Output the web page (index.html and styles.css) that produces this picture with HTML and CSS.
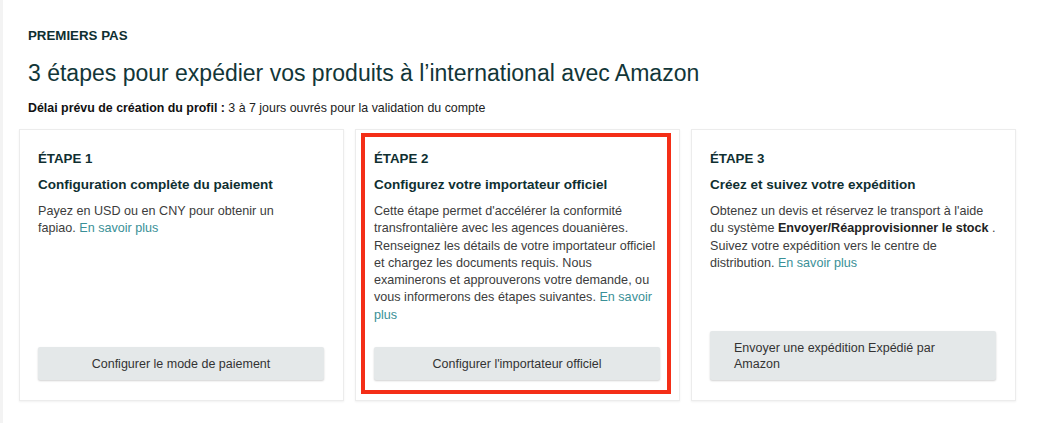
FILE: index.html
```html
<!DOCTYPE html>
<html lang="fr">
<head>
  <meta charset="UTF-8" />
  <title>Premiers pas</title>
  <link rel="stylesheet" href="styles.css">
</head>
<body>
  <div class="page">
    <!-- En-tête -->
    <div class="intro">
      <div class="kicker">PREMIERS PAS</div>
      <h1>3 étapes pour expédier vos produits à l’international avec Amazon</h1>
      <p class="delai"><b>Délai prévu de création du profil :</b> 3 à 7 jours ouvrés pour la validation du compte</p>
    </div>

    <!-- Les 3 étapes -->
    <div class="steps">
      <div class="step">
        <div class="step-num">ÉTAPE 1</div>
        <div class="step-title">Configuration complète du paiement</div>
        <p class="step-text">Payez en USD ou en CNY pour obtenir un<br>fapiao. <a href="#">En savoir plus</a></p>
        <button class="btn"><span>Configurer le mode de paiement</span></button>
      </div>

      <div class="step highlight">
        <div class="step-num">ÉTAPE 2</div>
        <div class="step-title">Configurez votre importateur officiel</div>
        <p class="step-text">Cette étape permet d'accélérer la conformité transfrontalière avec les agences douanières. Renseignez les détails de votre importateur officiel et chargez les documents requis. Nous examinerons et approuverons votre demande, ou vous informerons des étapes suivantes. <a href="#">En savoir plus</a></p>
        <button class="btn"><span>Configurer l'importateur officiel</span></button>
      </div>

      <div class="step">
        <div class="step-num">ÉTAPE 3</div>
        <div class="step-title">Créez et suivez votre expédition</div>
        <p class="step-text">Obtenez un devis et réservez le transport à l'aide du système <b>Envoyer/Réapprovisionner le stock</b> . Suivez votre expédition vers le centre de distribution. <a href="#">En savoir plus</a></p>
        <button class="btn"><span>Envoyer une expédition Expédié par Amazon</span></button>
      </div>
    </div>
  </div>
</body>
</html>
```

FILE: styles.css
```css
/* Styles de base */
body {
  margin: 0;
  background: #fff;
  font-family: "Liberation Sans", Arial, Helvetica, sans-serif;
  color: #3a3a3a;
}

.page {
  min-height: 423px;
  box-sizing: border-box;
  border-left: 3px solid #f3f3f3;
  padding: 28px 23px 0 16px;
}

/* En-tête */
.intro {
  padding-left: 9px;
}

.kicker {
  font-size: 13.3px;
  line-height: 16px;
  font-weight: bold;
  color: #0f2f31;
}

h1 {
  margin: 15px 0 0;
  font-size: 23px;
  line-height: 28px;
  font-weight: normal;
  color: #123638;
}

.delai {
  margin: 13px 0 0;
  font-size: 12.4px;
  line-height: 16px;
  color: #222;
}

.delai b {
  color: #111;
}

/* Cartes des étapes */
.steps {
  margin-top: 13px;
  display: grid;
  grid-template-columns: repeat(3, 1fr);
  gap: 11px;
}

.step {
  position: relative;
  height: 272px;
  box-sizing: border-box;
  display: flex;
  flex-direction: column;
  padding: 21px 19px 20px 18px;
  background: #fff;
  border: 1px solid #ececec;
  box-shadow: 0 1px 2px rgba(0, 0, 0, 0.06);
}

/* cadre rouge autour de l'étape mise en avant */
.highlight::after {
  content: "";
  position: absolute;
  top: 3px;
  left: 5px;
  right: 8px;
  bottom: 6px;
  border: 4px solid #f42e17;
  pointer-events: none;
}

.step-num {
  font-size: 13.3px;
  line-height: 16px;
  font-weight: bold;
  color: #0f2f31;
}

.step-title {
  margin-top: 10px;
  font-size: 13.5px;
  line-height: 16px;
  font-weight: bold;
  color: #0f2f31;
}

.step-text {
  margin: 10px 0 0;
  font-size: 12.6px;
  line-height: 17.3px;
  color: #3c3c3c;
}

.step-text b {
  color: #222;
}

.step-text a {
  color: #3a9097;
  text-decoration: none;
}

.btn {
  margin-top: auto;
  display: flex;
  justify-content: center;
  align-items: center;
  padding: 9px 24px 8px;
  border: none;
  border-radius: 2px;
  background: #e4e8e9;
  box-shadow: 0 1px 2px rgba(0, 0, 0, 0.18);
  font-family: inherit;
  font-size: 12.5px;
  line-height: 16px;
  color: #333;
  text-align: left;
  cursor: pointer;
}
```
